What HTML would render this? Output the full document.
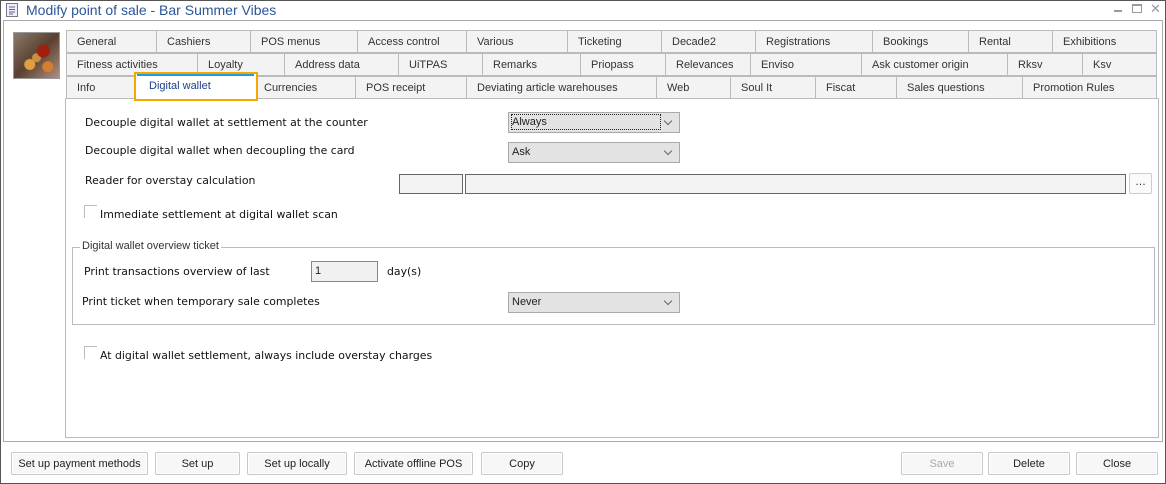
<!DOCTYPE html>
<html><head><meta charset="utf-8"><style>
*{box-sizing:border-box;margin:0;padding:0}
body{width:1166px;height:484px;background:#fff;font-family:"Liberation Sans",sans-serif;font-size:11px;color:#222;position:relative;overflow:hidden}
.a{position:absolute}
.win{left:0;top:0;width:1166px;height:484px;border:1px solid #555;background:#fff}
.title{left:26px;top:2px;font-size:14px;color:#2b5797}
.panel{left:3px;top:20px;width:1160px;height:422px;border:1px solid #aaa}
.tab{position:absolute;height:23px;background:#f3f3f3;border:1px solid #bbb;padding-left:10px;line-height:22px;font-size:11px;color:#333;white-space:nowrap}
.content{left:65px;top:98px;width:1094px;height:340px;border:1px solid #bbb;background:#fff}
.lbl{position:absolute;font-family:"DejaVu Sans",sans-serif;font-size:10.9px;color:#111;white-space:nowrap}
.sel{position:absolute;height:21px;border:1px solid #aaa;background:#e3e3e3;font-size:11px;line-height:19px;padding-left:3px}
.sel:after{content:"";position:absolute;right:8px;top:5px;width:5px;height:5px;border-right:1px solid #666;border-bottom:1px solid #666;transform:rotate(45deg)}
.cb{position:absolute;width:13px;height:13px;border-left:1px solid #bbb;border-top:1px solid #bbb}
.btn{position:absolute;top:452px;height:23px;border:1px solid #c8c8c8;border-radius:2px;background:#f7f7f7;text-align:center;line-height:22px;font-size:11px;color:#222;box-shadow:inset 0 0 0 1px #fff}
</style></head><body>
<div class="a win"></div>
<svg class="a" style="left:6px;top:3px" width="12" height="14"><rect x="0.5" y="0.5" width="11" height="13" fill="#eef" stroke="#778"/><path d="M3 4h6M3 6.5h6M3 9h6M3 11h4" stroke="#667"/></svg>
<div class="a title">Modify point of sale - Bar Summer Vibes</div>
<div class="a" style="left:1114px;top:10px;width:8px;height:2px;background:#999"></div>
<div class="a" style="left:1132px;top:4px;width:10px;height:9px;border:1px solid #999;border-top-width:2px"></div>
<div class="a" style="left:1150px;top:1px;font-size:13px;color:#999">✕</div>
<div class="a panel"></div>
<div class="a" style="left:13px;top:32px;width:47px;height:47px;border:1px solid #999;background:radial-gradient(circle at 35% 70%,#e0a040 0 5px,transparent 6px),radial-gradient(circle at 65% 40%,#a02010 0 6px,transparent 7px),radial-gradient(circle at 75% 75%,#d08030 0 5px,transparent 6px),radial-gradient(circle at 50% 55%,#c89040 0 4px,transparent 5px),linear-gradient(135deg,#8a7a6a,#5a4030 50%,#b09080)"></div>

<div class="tab" style="left:66px;top:30px;width:91px">General</div>
<div class="tab" style="left:156px;top:30px;width:95px">Cashiers</div>
<div class="tab" style="left:250px;top:30px;width:108px">POS menus</div>
<div class="tab" style="left:357px;top:30px;width:110px">Access control</div>
<div class="tab" style="left:466px;top:30px;width:102px">Various</div>
<div class="tab" style="left:567px;top:30px;width:95px">Ticketing</div>
<div class="tab" style="left:661px;top:30px;width:95px">Decade2</div>
<div class="tab" style="left:755px;top:30px;width:118px">Registrations</div>
<div class="tab" style="left:872px;top:30px;width:97px">Bookings</div>
<div class="tab" style="left:968px;top:30px;width:85px">Rental</div>
<div class="tab" style="left:1052px;top:30px;width:105px">Exhibitions</div>

<div class="tab" style="left:66px;top:53px;width:132px">Fitness activities</div>
<div class="tab" style="left:197px;top:53px;width:88px">Loyalty</div>
<div class="tab" style="left:284px;top:53px;width:115px">Address data</div>
<div class="tab" style="left:398px;top:53px;width:85px">UiTPAS</div>
<div class="tab" style="left:482px;top:53px;width:99px">Remarks</div>
<div class="tab" style="left:580px;top:53px;width:86px">Priopass</div>
<div class="tab" style="left:665px;top:53px;width:86px">Relevances</div>
<div class="tab" style="left:750px;top:53px;width:112px">Enviso</div>
<div class="tab" style="left:861px;top:53px;width:147px">Ask customer origin</div>
<div class="tab" style="left:1007px;top:53px;width:76px">Rksv</div>
<div class="tab" style="left:1082px;top:53px;width:75px">Ksv</div>

<div class="tab" style="left:66px;top:76px;width:71px">Info</div>
<div class="tab" style="left:253px;top:76px;width:103px">Currencies</div>
<div class="tab" style="left:355px;top:76px;width:112px">POS receipt</div>
<div class="tab" style="left:466px;top:76px;width:191px">Deviating article warehouses</div>
<div class="tab" style="left:656px;top:76px;width:75px">Web</div>
<div class="tab" style="left:730px;top:76px;width:86px">Soul It</div>
<div class="tab" style="left:815px;top:76px;width:82px">Fiscat</div>
<div class="tab" style="left:896px;top:76px;width:127px">Sales questions</div>
<div class="tab" style="left:1022px;top:76px;width:135px">Promotion Rules</div>

<div class="a content"></div>
<div class="a" style="left:134px;top:72px;width:124px;height:29px;border:2px solid #f5a800;background:#fff"></div>
<div class="a" style="left:137px;top:74px;width:117px;height:2px;background:#1e9be8"></div>
<div class="a" style="left:149px;top:80px;font-size:11px;color:#1a3f8f">Digital wallet</div>

<div class="lbl" style="left:85px;top:116px">Decouple digital wallet at settlement at the counter</div>
<div class="sel" style="left:508px;top:112px;width:172px"><span style="outline:1px dotted #222;display:inline-block;width:148px;line-height:14px;margin-top:1px">Always</span></div>
<div class="lbl" style="left:85px;top:144px">Decouple digital wallet when decoupling the card</div>
<div class="sel" style="left:508px;top:142px;width:172px">Ask</div>
<div class="lbl" style="left:85px;top:174px">Reader for overstay calculation</div>
<div class="a" style="left:399px;top:174px;width:64px;height:20px;border:1px solid #666;background:#f3f3f3"></div>
<div class="a" style="left:465px;top:174px;width:661px;height:20px;border:1px solid #666;background:#f3f3f3"></div>
<div class="a" style="left:1129px;top:173px;width:23px;height:21px;border:1px solid #ccc;border-radius:2px;background:#fafafa;text-align:center;font-size:11px;line-height:17px">…</div>
<div class="cb" style="left:84px;top:205px"></div>
<div class="lbl" style="left:100px;top:208px">Immediate settlement at digital wallet scan</div>

<div class="a" style="left:72px;top:247px;width:1083px;height:78px;border:1px solid #bbb"></div>
<div class="a" style="left:80px;top:240px;background:#fff;padding:0 2px;font-size:11px;color:#333">Digital wallet overview ticket</div>
<div class="lbl" style="left:84px;top:265px">Print transactions overview of last</div>
<div class="a" style="left:311px;top:261px;width:67px;height:21px;border:1px solid #888;background:#f1f1f1;padding-left:3px;line-height:19px">1</div>
<div class="lbl" style="left:387px;top:265px">day(s)</div>
<div class="lbl" style="left:82px;top:295px">Print ticket when temporary sale completes</div>
<div class="sel" style="left:508px;top:292px;width:172px">Never</div>

<div class="cb" style="left:84px;top:346px"></div>
<div class="lbl" style="left:100px;top:349px">At digital wallet settlement, always include overstay charges</div>

<div class="btn" style="left:11px;width:137px">Set up payment methods</div>
<div class="btn" style="left:155px;width:85px">Set up</div>
<div class="btn" style="left:247px;width:100px">Set up locally</div>
<div class="btn" style="left:354px;width:119px">Activate offline POS</div>
<div class="btn" style="left:481px;width:82px">Copy</div>
<div class="btn" style="left:901px;width:82px;color:#aaa">Save</div>
<div class="btn" style="left:988px;width:82px">Delete</div>
<div class="btn" style="left:1076px;width:82px">Close</div>
</body></html>
